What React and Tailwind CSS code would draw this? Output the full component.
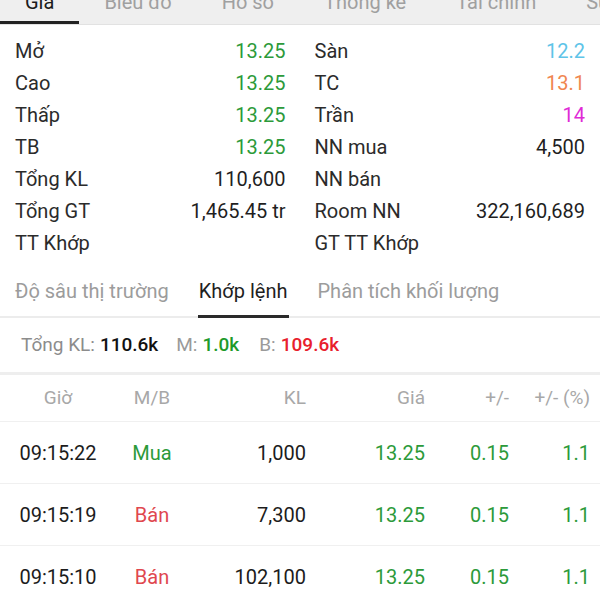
import React from "react";

const GREEN = "text-[#2c9a3a]";

function InfoRow({ label, value, color = "text-[#1f1f1f]" }) {
  return (
    <div className="flex items-center justify-between h-[32px] leading-[32px]">
      <span className="text-[#2b2b2b]">{label}</span>
      <span className={color}>{value}</span>
    </div>
  );
}

export default function App() {
  const topTabs = ["Giá", "Biểu đồ", "Hồ sơ", "Thống kê", "Tài chính", "Sự kiện"];
  const left = [
    ["Mở", "13.25", GREEN],
    ["Cao", "13.25", GREEN],
    ["Thấp", "13.25", GREEN],
    ["TB", "13.25", GREEN],
    ["Tổng KL", "110,600"],
    ["Tổng GT", "1,465.45 tr"],
    ["TT Khớp", ""],
  ];
  const right = [
    ["Sàn", "12.2", "text-[#5ec4e8]"],
    ["TC", "13.1", "text-[#f08650]"],
    ["Trần", "14", "text-[#e02ad6]"],
    ["NN mua", "4,500"],
    ["NN bán", ""],
    ["Room NN", "322,160,689"],
    ["GT TT Khớp", ""],
  ];
  const rows = [
    ["09:15:22", "Mua", "1,000"],
    ["09:15:19", "Bán", "7,300"],
    ["09:15:10", "Bán", "102,100"],
  ];
  const cols = "grid grid-cols-[116px_72px_118px_119px_84px_81px] pr-[10px]";

  return (
    <div
      className="w-[600px] h-[600px] overflow-hidden bg-white"
      style={{ fontFamily: "Roboto, 'Noto Sans', sans-serif" }}
    >
      {/* top tabs */}
      <div className="flex h-[25px] overflow-hidden bg-[#efefef] border-b border-[#e2e2e2] whitespace-nowrap">
        {topTabs.map((t, i) => (
          <div key={t} className="flex flex-col justify-between px-[25px] h-[24px] shrink-0 relative">
            <span
              className={`-mt-[10px] leading-[24px] text-[20px] ${
                i === 0 ? "text-[#1c1c1c]" : "text-[#a0a0a0]"
              }`}
            >
              {t}
            </span>
            {i === 0 && <div className="absolute left-0 right-0 bottom-0 h-[3px] bg-[#222]" />}
          </div>
        ))}
      </div>

      {/* info grid */}
      <div className="grid grid-cols-2 gap-x-[29px] pl-[15px] pr-[15px] pt-[10px] text-[20px]">
        <div>
          {left.map(([l, v, c]) => (
            <InfoRow key={l} label={l} value={v} color={c} />
          ))}
        </div>
        <div>
          {right.map(([l, v, c]) => (
            <InfoRow key={l} label={l} value={v} color={c} />
          ))}
        </div>
      </div>

      {/* second tabs */}
      <div className="flex border-b-[2px] border-[#ececec] text-[20px] whitespace-nowrap">
        {["Độ sâu thị trường", "Khớp lệnh", "Phân tích khối lượng"].map((t, i) => (
          <div key={t} className="flex flex-col px-[15px] pt-[21px]">
            <span className={`leading-[23px] ${i === 1 ? "text-[#1f1f1f]" : "text-[#9c9c9c]"}`}>{t}</span>
            <div className={`mt-[12px] h-[3px] -mb-[2px] -mx-[1px] ${i === 1 ? "bg-[#2a2a2a]" : "bg-transparent"}`} />
          </div>
        ))}
      </div>

      {/* summary */}
      <div className="flex items-center h-[57px] pl-[21px] text-[19px] border-b-[3px] border-[#eeeeee]">
        <span className="text-[#8c8c8c]">Tổng KL:</span>
        <span className="ml-[5px] font-medium text-[#111]">110.6k</span>
        <span className="ml-[18px] text-[#9a9a9a]">M:</span>
        <span className="ml-[5px] font-medium text-[#1e9a2a]">1.0k</span>
        <span className="ml-[20px] text-[#9a9a9a]">B:</span>
        <span className="ml-[5px] font-medium text-[#e8202c]">109.6k</span>
      </div>

      {/* table header */}
      <div className={`${cols} h-[47px] items-center text-[19px] text-[#a8a8a8] border-b border-[#f0f0f0]`}>
        <span className="text-center">Giờ</span>
        <span className="text-center">M/B</span>
        <span className="text-right">KL</span>
        <span className="text-right">Giá</span>
        <span className="text-right">+/-</span>
        <span className="text-right">+/- (%)</span>
      </div>

      {/* rows */}
      {rows.map(([time, side, kl]) => (
        <div key={time} className={`${cols} h-[62px] items-center text-[20px] border-b border-[#f0f0f0]`}>
          <span className="text-center text-[#1c1c1c]">{time}</span>
          <span className={`text-center ${side === "Mua" ? "text-[#2c9a3a]" : "text-[#e0474f]"}`}>{side}</span>
          <span className="text-right text-[#1c1c1c]">{kl}</span>
          <span className="text-right text-[#2c9a3a]">13.25</span>
          <span className="text-right text-[#2c9a3a]">0.15</span>
          <span className="text-right text-[#2c9a3a]">1.1</span>
        </div>
      ))}
    </div>
  );
}
